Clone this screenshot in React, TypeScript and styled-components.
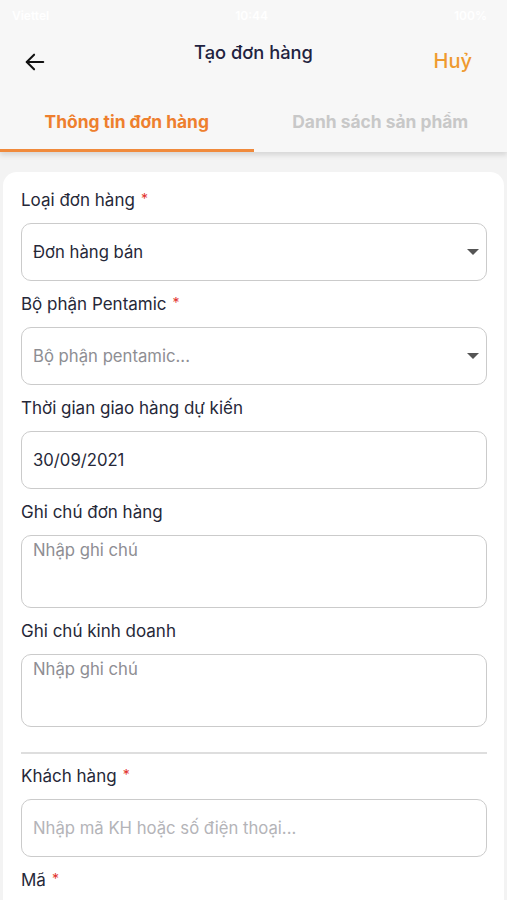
import React from "react";
import styled, { createGlobalStyle } from "styled-components";

const GlobalStyle = createGlobalStyle`
    html, body {
        margin: 0;
        padding: 0;
        background: #f3f3f3;
    }
    * {
        box-sizing: border-box;
    }
    body {
        font-family: Inter, "Noto Sans", "Liberation Sans", sans-serif;
    }
`;

const Screen = styled.div`
    width: 507px;
    height: 900px;
    overflow: hidden;
    background: #f3f3f3;
    display: flex;
    flex-direction: column;
`;

const Top = styled.div`
    background: #f7f7f7;
    box-shadow: 0 3px 5px rgba(0, 0, 0, 0.12);
    position: relative;
    z-index: 2;
`;

const StatusBar = styled.div`
    height: 30px;
    display: flex;
    align-items: center;
    justify-content: space-between;
    padding: 0 20px 0 12px;
    color: #ffffff;
    font-size: 12px;
    font-weight: 600;
`;

const NavBar = styled.div`
    height: 62px;
    display: grid;
    grid-template-columns: 80px 1fr 80px;
    align-items: center;
`;

const BackButton = styled.div`
    padding-left: 24px;
    display: flex;
    align-items: center;
    padding-top: 2px;
`;

const Title = styled.div`
    text-align: center;
    font-size: 18.3px;
    font-weight: 500;
    color: #1f2340;
    margin-top: -18px;
`;

const Cancel = styled.div`
    text-align: right;
    padding-right: 35px;
    font-size: 20px;
    font-weight: 500;
    color: #ef9a2f;
`;

const Tabs = styled.div`
    display: flex;
    height: 60px;
`;

const Tab = styled.div<{ $active?: boolean }>`
    flex: 1;
    display: flex;
    align-items: center;
    justify-content: center;
    padding-top: 2px;
    font-size: 17.4px;
    font-weight: 700;
    color: ${(p) => (p.$active ? "#ee7f2e" : "#c8c8c8")};
    border-bottom: 3px solid ${(p) => (p.$active ? "#f08a3c" : "transparent")};
`;

const Card = styled.div`
    margin: 20px 3px 0;
    background: #ffffff;
    border-radius: 14px 14px 0 0;
    padding: 17px 17px 0 18px;
    flex: 1;
    display: flex;
    flex-direction: column;
`;

const Field = styled.div`
    display: flex;
    flex-direction: column;
    gap: 12px;
    margin-bottom: 12px;
`;

const Label = styled.div`
    height: 22px;
    line-height: 22px;
    font-size: 17px;
    color: #262838;
`;

const Required = styled.span`
    color: #e2342d;
    font-size: 14px;
    margin-left: 6px;
    vertical-align: top;
    position: relative;
    top: -1px;
`;

const Box = styled.div<{ $tall?: boolean; $muted?: boolean }>`
    height: ${(p) => (p.$tall ? "73px" : "58px")};
    border: 1.5px solid #cbcbcb;
    border-radius: 10px;
    display: flex;
    align-items: ${(p) => (p.$tall ? "flex-start" : "center")};
    justify-content: space-between;
    padding: ${(p) => (p.$tall ? "4px 12px 0 11px" : "0 7px 0 11px")};
    font-size: 16.7px;
    color: ${(p) => (p.$muted ? "#8e8e93" : "#262838")};
`;

const Faint = styled.span`
    color: #b4b4b8;
`;

const Caret = styled.span`
    width: 0;
    height: 0;
    border-left: 6px solid transparent;
    border-right: 6px solid transparent;
    border-top: 6px solid #555;
`;

const Divider = styled.div`
    height: 1.5px;
    background: #dedede;
    margin: 13px 0 11px;
`;

const BackArrow = () => (
    <svg width="22" height="22" viewBox="0 0 24 24" fill="none" stroke="#111" strokeWidth="2.2" strokeLinecap="round" strokeLinejoin="round">
        <path d="M21 12H3" />
        <path d="M11 4l-8 8 8 8" />
    </svg>
);

export default function App() {
    return (
        <Screen>
            <GlobalStyle />
            <Top>
                <StatusBar>
                    <span>Viettel</span>
                    <span>10:44</span>
                    <span>100%</span>
                </StatusBar>
                <NavBar>
                    <BackButton>
                        <BackArrow />
                    </BackButton>
                    <Title>Tạo đơn hàng</Title>
                    <Cancel>Huỷ</Cancel>
                </NavBar>
                <Tabs>
                    <Tab $active>Thông tin đơn hàng</Tab>
                    <Tab>Danh sách sản phẩm</Tab>
                </Tabs>
            </Top>
            <Card>
                <Field>
                    <Label>
                        Loại đơn hàng<Required>*</Required>
                    </Label>
                    <Box>
                        <span>Đơn hàng bán</span>
                        <Caret />
                    </Box>
                </Field>
                <Field>
                    <Label>
                        Bộ phận Pentamic<Required>*</Required>
                    </Label>
                    <Box $muted>
                        <span>Bộ phận pentamic...</span>
                        <Caret />
                    </Box>
                </Field>
                <Field>
                    <Label>Thời gian giao hàng dự kiến</Label>
                    <Box>
                        <span>30/09/2021</span>
                    </Box>
                </Field>
                <Field>
                    <Label>Ghi chú đơn hàng</Label>
                    <Box $tall $muted>
                        <span>Nhập ghi chú</span>
                    </Box>
                </Field>
                <Field>
                    <Label>Ghi chú kinh doanh</Label>
                    <Box $tall $muted>
                        <span>Nhập ghi chú</span>
                    </Box>
                </Field>
                <Divider />
                <Field>
                    <Label>
                        Khách hàng<Required>*</Required>
                    </Label>
                    <Box>
                        <Faint>Nhập mã KH hoặc số điện thoại...</Faint>
                    </Box>
                </Field>
                <Field>
                    <Label>
                        Mã<Required>*</Required>
                    </Label>
                </Field>
            </Card>
        </Screen>
    );
}
